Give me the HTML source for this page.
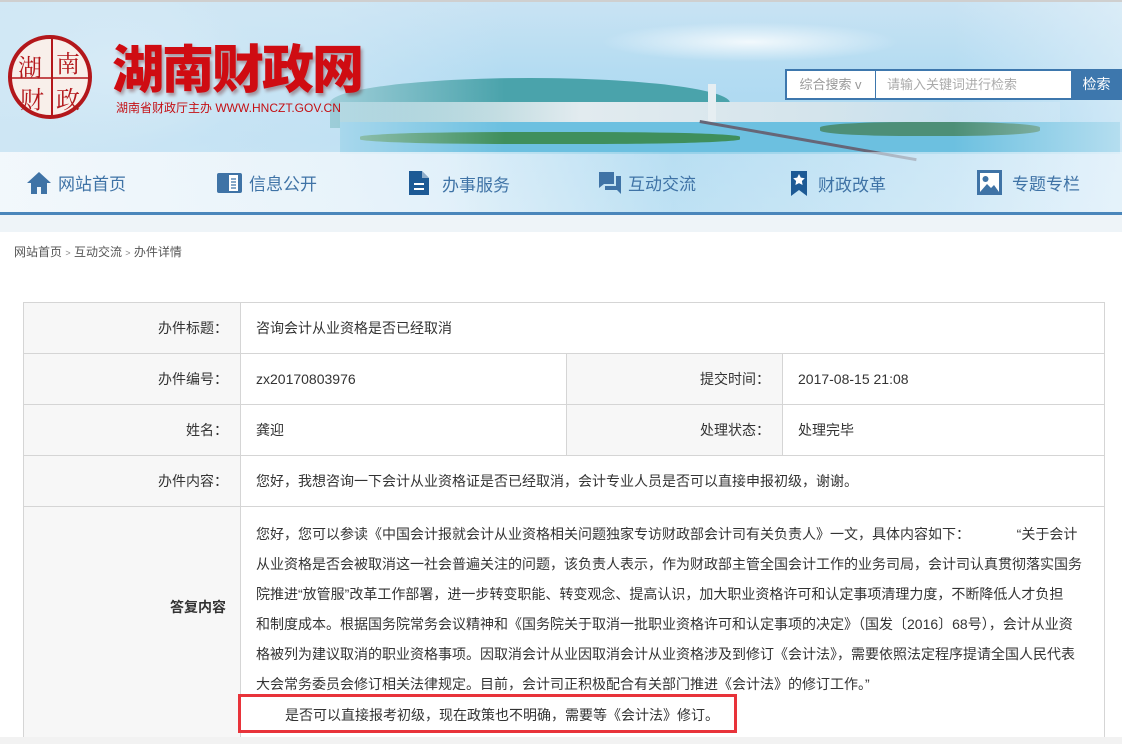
<!DOCTYPE html>
<html><head><meta charset="utf-8"><style>
*{margin:0;padding:0;box-sizing:border-box}
body{width:1122px;height:744px;overflow:hidden;background:#fff;font-family:"Liberation Sans","Noto Sans CJK SC",sans-serif;color:#333;position:relative}
.banner{position:absolute;left:0;top:0;width:1122px;height:232px;background:linear-gradient(180deg,#c9e3f3 0%,#b4dcf2 30%,#a9d7f0 60%,#b8def2 100%);border-top:2px solid #cfcfcf;overflow:hidden}
.abs{position:absolute}
.nav{position:absolute;left:0;top:152px;width:1122px;height:61px;background:linear-gradient(90deg,rgba(245,249,252,.92) 0%,rgba(240,247,252,.75) 40%,rgba(200,230,245,.45) 60%,rgba(235,245,252,.75) 100%)}
.navline{position:absolute;left:0;top:212px;width:1122px;height:3px;background:#4a86bb}
.band{position:absolute;left:0;top:215px;width:1122px;height:17px;background:#eef4f8}
.ni{position:absolute;top:170px;font-size:17px;color:#3f73a6;display:flex;align-items:center;gap:6px}
.t{position:absolute;left:23px;top:302px;width:1082px;border:1px solid #d5d5d5;border-bottom:none}
.r{position:relative;height:51px;border-bottom:1px solid #d5d5d5;font-size:14px}
.c{position:absolute;top:0;height:100%;line-height:50px}
.l{background:#f7f7f7;text-align:right;padding-right:12px;border-right:1px solid #d5d5d5}
.v{padding-left:15px}
.ans{font-size:14px;line-height:30px;white-space:nowrap}
</style></head><body>
<div class="banner">
  <div class="abs" style="left:-40px;top:-20px;width:300px;height:170px;border-radius:50%;background:radial-gradient(ellipse,rgba(255,255,255,.7),rgba(255,255,255,0) 70%)"></div>
  <div class="abs" style="left:600px;top:20px;width:300px;height:40px;border-radius:50%;background:radial-gradient(ellipse,rgba(255,255,255,.8),rgba(255,255,255,0) 70%)"></div>
  <div class="abs" style="left:330px;top:76px;width:400px;height:50px;border-radius:50% 50% 0 0;background:#4aa3ab"></div>
  <div class="abs" style="left:340px;top:100px;width:720px;height:20px;background:linear-gradient(90deg,rgba(230,240,245,.4),#e2ebef,#d4e4ec,rgba(220,235,245,.3))"></div>
  <div class="abs" style="left:708px;top:82px;width:8px;height:38px;background:#e6eef2"></div>
  <div class="abs" style="left:340px;top:120px;width:780px;height:32px;background:#6cc0e0"></div>
  <div class="abs" style="left:360px;top:130px;width:380px;height:12px;border-radius:40%;background:#3f8f5c"></div>
  <div class="abs" style="left:820px;top:120px;width:220px;height:14px;border-radius:40%;background:#4d8f77"></div>
  <div class="abs" style="left:700px;top:118px;width:220px;height:3px;background:#667;transform:rotate(10deg);transform-origin:0 0"></div>
  <div class="abs" style="left:0;top:0;width:1122px;height:232px;background:linear-gradient(90deg,rgba(210,232,245,.9) 0%,rgba(210,232,245,.6) 30%,rgba(210,232,245,0) 45%,rgba(210,232,245,0) 85%,rgba(230,242,250,.6) 100%)"></div>
  <svg class="abs" style="left:6px;top:30px" width="88" height="90" viewBox="0 0 88 90">
    <circle cx="44" cy="45" r="40" fill="#f8efea" stroke="#b3171b" stroke-width="4"/>
    <line x1="46" y1="6" x2="46" y2="84" stroke="#b3171b" stroke-width="2"/>
    <line x1="6" y1="46" x2="84" y2="46" stroke="#b3171b" stroke-width="1.5"/>
    <text x="12" y="44" font-size="24" fill="#b3171b" font-family="Noto Serif CJK SC,serif">湖</text>
    <text x="50" y="40" font-size="24" fill="#b3171b" font-family="Noto Serif CJK SC,serif">南</text>
    <text x="14" y="76" font-size="24" fill="#b3171b" font-family="Noto Serif CJK SC,serif">财</text>
    <text x="50" y="76" font-size="24" fill="#b3171b" font-family="Noto Serif CJK SC,serif">政</text>
  </svg>
  <div class="abs" style="left:112px;top:32px;font-size:52px;font-weight:900;color:#cf0c12;letter-spacing:-2px;font-family:'Noto Sans CJK SC',sans-serif;text-shadow:2px 3px 3px rgba(90,0,0,.35);line-height:64px">湖南财政网</div>
  <div class="abs" style="left:116px;top:97px;font-size:12px;color:#c40f14;line-height:18px">湖南省财政厅主办 WWW.HNCZT.GOV.CN</div>
  <div class="abs" style="left:785px;top:67px;width:287px;height:31px;background:#fff;border:2px solid #3d77ad;border-right:none"></div>
  <div class="abs" style="left:786px;top:69px;width:90px;height:28px;line-height:28px;font-size:13px;color:#999;text-align:center;border-right:1px solid #3d77ad">综合搜索 v</div>
  <div class="abs" style="left:887px;top:69px;line-height:28px;font-size:13px;color:#aaa">请输入关键词进行检索</div>
  <div class="abs" style="left:1071px;top:67px;width:51px;height:31px;background:#3d77ad;color:#fff;font-size:14px;line-height:31px;text-align:center">检索</div>
</div>
<div class="nav"></div>
<div class="navline"></div>
<div class="band"></div>
<div class="ni" style="left:26px"><svg width="26" height="24" viewBox="0 0 26 24"><path d="M13 1L1 12h4v11h6v-7h4v7h6V12h4z" fill="#3f73a6"/></svg>网站首页</div>
<div class="ni" style="left:217px"><svg width="26" height="22" viewBox="0 0 26 22"><rect x="0" y="1" width="25" height="20" rx="2" fill="#3f73a6"/><rect x="12" y="3" width="9" height="16" fill="#fff"/><path d="M14 7h5M14 10h5M14 13h5M14 16h5" stroke="#3f73a6" stroke-width="1.2"/></svg>信息公开</div>
<div class="ni" style="left:408px"><svg width="22" height="26" viewBox="0 0 22 26"><path d="M1 1h13l7 7v17H1z" fill="#1d5a95"/><path d="M14 1v7h7" fill="#fff" opacity=".5"/><rect x="6" y="13" width="10" height="2" fill="#fff"/><rect x="6" y="18" width="10" height="2" fill="#fff"/></svg><span style="margin-left:6px">办事服务</span></div>
<div class="ni" style="left:598px"><svg width="24" height="24" viewBox="0 0 24 24"><path d="M1 1h15v12H6l-5 4z" fill="#3f73a6"/><path d="M18 5h5v18l-4-4H7v-4h11z" fill="#3f73a6"/></svg>互动交流</div>
<div class="ni" style="left:790px"><svg width="18" height="27" viewBox="0 0 18 27"><path d="M1 1h16v25l-8-6-8 6z" fill="#1d5a95"/><path d="M9 4l1.8 3.6 4 .6-2.9 2.8.7 4L9 13.1 5.4 15l.7-4-2.9-2.8 4-.6z" fill="#fff"/></svg><span style="margin-left:4px">财政改革</span></div>
<div class="ni" style="left:977px"><svg width="25" height="25" viewBox="0 0 25 25"><rect x="0" y="0" width="25" height="25" fill="#3f73a6"/><rect x="3" y="3" width="19" height="19" fill="#fff"/><circle cx="8.5" cy="9" r="3" fill="#3f73a6"/><path d="M3 22l7-8 4 4 3-3 5 7z" fill="#3f73a6"/></svg><span style="margin-left:4px">专题专栏</span></div>

<div class="abs" style="left:14px;top:243px;font-size:12px;color:#555">网站首页 <span style="font-size:9px;color:#888">&gt;</span> 互动交流 <span style="font-size:9px;color:#888">&gt;</span> 办件详情</div>

<div class="t">
  <div class="r"><div class="c l" style="left:0;width:217px">办件标题：</div><div class="c v" style="left:217px">咨询会计从业资格是否已经取消</div></div>
  <div class="r"><div class="c l" style="left:0;width:217px">办件编号：</div><div class="c v" style="left:217px">zx20170803976</div>
    <div class="c l" style="left:542px;width:217px;border-left:1px solid #d5d5d5">提交时间：</div><div class="c v" style="left:759px">2017-08-15 21:08</div></div>
  <div class="r"><div class="c l" style="left:0;width:217px">姓名：</div><div class="c v" style="left:217px">龚迎</div>
    <div class="c l" style="left:542px;width:217px;border-left:1px solid #d5d5d5">处理状态：</div><div class="c v" style="left:759px">处理完毕</div></div>
  <div class="r"><div class="c l" style="left:0;width:217px">办件内容：</div><div class="c v" style="left:217px">您好，我想咨询一下会计从业资格证是否已经取消，会计专业人员是否可以直接申报初级，谢谢。</div></div>
  <div class="r" style="height:233px"><div class="c l" style="left:0;width:217px;line-height:200px;font-weight:bold;padding-right:14px">答复内容</div>
    <div class="c" style="left:232px;top:12px;height:auto">
      <div class="ans">您好，您可以参读《中国会计报就会计从业资格相关问题独家专访财政部会计司有关负责人》一文，具体内容如下：&nbsp;&nbsp;&nbsp;&nbsp;&nbsp;&nbsp;&nbsp;&nbsp;&nbsp;&nbsp;&nbsp;&nbsp;“关于会计</div>
      <div class="ans">从业资格是否会被取消这一社会普遍关注的问题，该负责人表示，作为财政部主管全国会计工作的业务司局，会计司认真贯彻落实国务</div>
      <div class="ans">院推进“放管服”改革工作部署，进一步转变职能、转变观念、提高认识，加大职业资格许可和认定事项清理力度，不断降低人才负担</div>
      <div class="ans">和制度成本。根据国务院常务会议精神和《国务院关于取消一批职业资格许可和认定事项的决定》（国发〔2016〕68号），会计从业资</div>
      <div class="ans">格被列为建议取消的职业资格事项。因取消会计从业因取消会计从业资格涉及到修订《会计法》，需要依照法定程序提请全国人民代表</div>
      <div class="ans">大会常务委员会修订相关法律规定。目前，会计司正积极配合有关部门推进《会计法》的修订工作。”</div>
    </div>
  </div>
</div>
<div class="abs" style="left:238px;top:694px;width:499px;height:39px;border:3px solid #e8333a"></div>
<div class="abs" style="left:285px;top:705px;font-size:14px">是否可以直接报考初级，现在政策也不明确，需要等《会计法》修订。</div>
<div class="abs" style="left:0;top:737px;width:1122px;height:7px;background:#f2f2f2"></div>
</body></html>
